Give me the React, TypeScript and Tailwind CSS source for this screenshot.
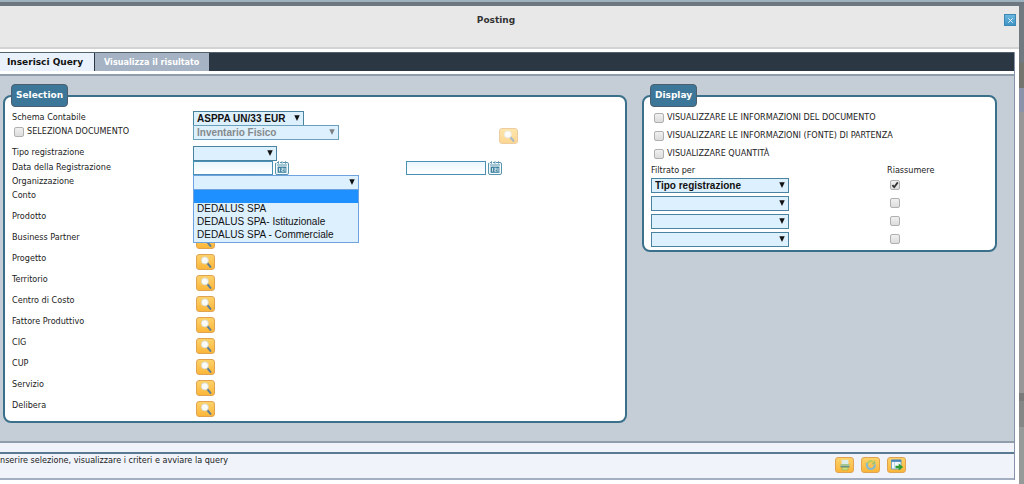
import type { ReactNode } from "react";

const labelFont = "font-['DejaVu_Sans_Condensed','DejaVu_Sans',sans-serif]";
const titleFont = "font-['DejaVu_Sans',sans-serif]";

function Select({ id, label, value, width, disabled, open }: {
  id: string;
  label: string;
  value?: string;
  width: string;
  disabled?: boolean;
  open?: boolean;
}) {
  return (
    <div className={`relative ${width}`}>
      <select
        id={id}
        aria-label={label}
        disabled={disabled}
        defaultValue={value ?? ""}
        className={`block h-[15px] w-full appearance-none border ${open ? "border-[#6fa3e0]" : disabled ? "border-[#6c9fbb]" : "border-[#4a83a0]"} bg-[#ddf0fd] pl-[3px] font-['Liberation_Sans',sans-serif] text-[10px] leading-[13px] font-bold opacity-100 outline-none ${disabled ? "text-[#85898c]" : "text-[#111]"}`}
      >
        <option value={value ?? ""}>{value ?? ""}</option>
      </select>
      <svg viewBox="0 0 6 6" className="pointer-events-none absolute top-[4px] right-[4px] size-[6px]" aria-hidden="true">
        <path d="M0.3 0.3h5.4L3 6z" fill={disabled ? "#7d8285" : "#111"} />
      </svg>
    </div>
  );
}

function Check({ id, label, checked }: { id: string; label?: string; checked?: boolean }) {
  return (
    <span className="relative block size-[10px] shrink-0">
      <input
        id={id}
        type="checkbox"
        aria-label={label}
        defaultChecked={checked}
        className="peer block size-[10px] appearance-none rounded-[2px] border border-[#b0b0b0] bg-linear-to-b from-[#f0f0f0] to-[#dcdcdc]"
      />
      <svg viewBox="0 0 10 10" className="pointer-events-none absolute inset-0 hidden size-[10px] peer-checked:block" aria-hidden="true">
        <path d="M2.4 5.2 4.2 7.2 7.8 2.4" fill="none" stroke="#333" strokeWidth="1.8" />
      </svg>
    </span>
  );
}

function IconButton({ label, faded, children }: { label: string; faded?: boolean; children: ReactNode }) {
  return (
    <button
      type="button"
      aria-label={label}
      disabled={faded}
      className={`flex h-[16px] w-[19px] shrink-0 items-center justify-center rounded-[3px] border border-[#dfa352] bg-linear-to-b from-[#fdd268] to-[#fbb638] ${faded ? "opacity-55" : ""}`}
    >
      {children}
    </button>
  );
}

function Magnifier() {
  return (
    <svg viewBox="0 0 12 12" className="size-[14px] shrink-0" aria-hidden="true">
      <path d="M6.8 6.6 9.8 10.2" stroke="#5d7f98" strokeWidth="1.8" strokeLinecap="round" />
      <circle cx="5" cy="4.6" r="3.1" fill="#f8fbf8" stroke="#d9d3bc" strokeWidth="0.7" />
    </svg>
  );
}

function CalendarButton({ label }: { label: string }) {
  return (
    <button type="button" aria-label={label} className="block size-[14px]">
      <svg viewBox="0 0 14 14" className="size-[14px]" aria-hidden="true">
        <rect x="0.5" y="1.5" width="13" height="12" rx="1.5" fill="#f4fbfe" stroke="#5793ac" />
        <path d="M1 1.5h12" stroke="#f4fbfe" strokeWidth="1" strokeDasharray="1 2" />
        <path d="M2 4h10M3.5 0.3v2.4M7 0.3v2.4M10.5 0.3v2.4" stroke="#5793ac" strokeWidth="1" />
        <path d="M2.6 5.6h8.8v6.2H2.6z" fill="#3d7f9c" />
        <path d="M4.6 7v3.6M6.4 7.3h1.8v1.4H6.8v1.6h1.8M10 7v3.6" fill="none" stroke="#e6f6fc" strokeWidth="0.9" />
      </svg>
    </button>
  );
}

function Fieldset({ title, className, children }: { title: string; className: string; children: ReactNode }) {
  return (
    <section className={`relative mt-[11px] rounded-[8px] border-2 border-[#3a708a] bg-white ${className}`}>
      <h2 className={`absolute -top-[13px] left-[6px] flex h-[23px] items-center rounded-[4px] border border-[#4b5f70] bg-[#3c7799] px-[4px] text-[9px] font-bold text-white ${titleFont}`}>
        {title}
      </h2>
      {children}
    </section>
  );
}

const lookups = [
  "Conto",
  "Prodotto",
  "Business Partner",
  "Progetto",
  "Territorio",
  "Centro di Costo",
  "Fattore Produttivo",
  "CIG",
  "CUP",
  "Servizio",
  "Delibera",
];

const organizations = ["DEDALUS SPA", "DEDALUS SPA- Istituzionale", "DEDALUS SPA - Commerciale"];

const displayOptions = [
  "VISUALIZZARE LE INFORMAZIONI DEL DOCUMENTO",
  "VISUALIZZARE LE INFORMAZIONI (FONTE) DI PARTENZA",
  "VISUALIZZARE QUANTITÀ",
];

const filters = ["Tipo registrazione", "", "", ""];

const dateInput =
  "block h-[14px] w-[80px] border border-[#4a8fb5] bg-linear-to-b from-[#eaf6fd] to-white px-[2px] font-['Liberation_Sans',sans-serif] text-[10px] outline-none";

function SelectionPanel() {
  const label = "w-[181px] shrink-0 leading-[12px]";
  return (
    <Fieldset title="Selection" className="min-w-0 flex-1 pt-[14px] pb-px pl-[7px]">
      <div className="flex h-[14px]">
        <label htmlFor="schema" className={label}>Schema Contabile</label>
        <Select id="schema" label="Schema Contabile" value="ASPPA UN/33 EUR" width="w-[111px]" />
      </div>
      <div className="flex h-[21px]">
        <div className="flex w-[181px] shrink-0 gap-[3px] pl-[2px]">
          <span className="pt-[2px]"><Check id="doc" /></span>
          <label htmlFor="doc" className="leading-[12px]">SELEZIONA DOCUMENTO</label>
        </div>
        <Select id="doctype" label="Tipo documento" value="Inventario Fisico" width="w-[146px]" disabled />
        <div className="ml-[160px] pt-[3px]">
          <IconButton label="Cerca documento" faded><Magnifier /></IconButton>
        </div>
      </div>
      <div className="flex h-[15px]">
        <label htmlFor="tipo" className={label}>Tipo registrazione</label>
        <Select id="tipo" label="Tipo registrazione" width="w-[84px]" />
      </div>
      <div className="flex h-[14px]">
        <label htmlFor="from" className={label}>Data della Registrazione</label>
        <div className="flex w-[213px] gap-[2px]">
          <input id="from" type="text" className={dateInput} />
          <CalendarButton label="Calendario data iniziale" />
        </div>
        <div className="flex gap-[2px]">
          <input type="text" aria-label="Data finale" className={dateInput} />
          <CalendarButton label="Calendario data finale" />
        </div>
      </div>
      <div className="flex h-[14px]">
        <label htmlFor="org" className={label}>Organizzazione</label>
        <div className="relative">
          <Select id="org" label="Organizzazione" width="w-[166px]" open />
          <ul
            role="listbox"
            aria-label="Organizzazione"
            className="absolute top-[14px] left-0 z-10 w-full border border-[#6fa3e0] bg-[#ddf0fd] font-['Liberation_Sans',sans-serif] text-[10px] leading-[13px] text-[#111]"
          >
            <li role="option" aria-selected="true" className="h-[13px] bg-[#1e90ff]" />
            {organizations.map((name) => (
              <li key={name} role="option" aria-selected="false" className="h-[13px] pl-[3px] leading-[12px] whitespace-nowrap">{name}</li>
            ))}
          </ul>
        </div>
      </div>
      {lookups.map((name) => (
        <div key={name} className="flex h-[21px]">
          <span className={label}>{name}</span>
          <div className="pt-[2px] pl-[3px]">
            <IconButton label={`Cerca ${name}`}><Magnifier /></IconButton>
          </div>
        </div>
      ))}
    </Fieldset>
  );
}

function DisplayPanel() {
  return (
    <Fieldset title="Display" className="w-[355px] shrink-0 self-start pt-[14px] pl-[7px]">
      {displayOptions.map((text, i) => (
        <div key={text} className="flex h-[18px] gap-[3px] pl-[3px]">
          <span className="pt-[2px]"><Check id={`show${i}`} /></span>
          <label htmlFor={`show${i}`} className="leading-[12px] whitespace-nowrap">{text}</label>
        </div>
      ))}
      <div className="flex h-[13px] leading-[11px]">
        <span className="w-[236px]">Filtrato per</span>
        <span>Riassumere</span>
      </div>
      {filters.map((value, i) => (
        <div key={i} className="flex h-[18px]">
          <div className="w-[239px]">
            <Select id={`filter${i}`} label={`Filtrato per ${i + 1}`} value={value} width="w-[138px]" />
          </div>
          <span className="pt-[2px]"><Check id={`sum${i}`} label={`Riassumere ${i + 1}`} checked={i === 0} /></span>
        </div>
      ))}
    </Fieldset>
  );
}

function PageEdge() {
  return (
    <div aria-hidden="true" className="flex w-[5px] shrink-0 flex-col bg-[#9a9799]">
      <div className="h-[57px] bg-[#70797f]" />
      <div className="h-[25px] bg-[#74756f]" />
      <div className="h-[24px] bg-[#8a93aa]" />
      <div className="flex-1" />
      <div className="h-[8px] bg-[#7a7a7b]" />
      <div className="h-[26px] bg-[#858686]" />
      <div className="h-[58px] bg-[#969b99]" />
    </div>
  );
}

export default function App() {
  return (
    <div className={`flex min-h-screen flex-col overflow-hidden border-t-2 border-[#9fb2c0] bg-[#6e777f] text-[9px] text-[#222] ${labelFont}`}>
      <div className="h-[4px]" />
      <div className="flex flex-1">
        <main className="flex min-w-0 flex-1 flex-col border-b border-[#999] bg-white">
          <header className="flex h-[43px] border-b-2 border-[#d3d3d3] bg-[#e8e8e8] pt-[8px] pr-[3px]">
            <h1 className={`flex-1 pr-[12px] text-center text-[9px] leading-[13px] font-bold text-[#333] ${titleFont}`}>Posting</h1>
            <button type="button" aria-label="Chiudi" className="flex size-[12px] items-center justify-center border border-[#3b87b5] bg-linear-to-b from-[#6bb6dd] to-[#3f94c4]">
              <svg viewBox="0 0 8 8" className="size-[7px]" aria-hidden="true">
                <path d="M1.5 1.5l5 5M6.5 1.5l-5 5" stroke="#e9f6fc" strokeWidth="1.1" />
              </svg>
            </button>
          </header>
          <div className="mt-[3px] mr-[4px] flex flex-1 flex-col border-r border-[#8494a6]">
            <nav className="flex h-[19px] border-t border-[#53616d] bg-[#2b3844]">
              <a href="#query" className={`flex w-[94px] items-center bg-[#e9f1fc] pt-px pl-[7px] text-[9px] font-bold whitespace-nowrap text-[#111] ${titleFont}`}>Inserisci Query</a>
              <a href="#result" className="ml-px flex w-[114px] items-center bg-[#a5b3c4] pt-px pl-[9px] font-bold whitespace-nowrap text-white">Visualizza il risultato</a>
            </nav>
            <div className="mt-[3px] flex flex-1 gap-[15px] border-y-2 border-[#909dab] bg-[#c5cdd7] pt-[8px] pr-[17px] pb-[18px] pl-[3px]">
              <SelectionPanel />
              <DisplayPanel />
            </div>
            <div className="h-[9px] bg-[#f0f3fa]" />
            <footer className="flex h-[28px] justify-between border-t-2 border-b-2 border-t-[#5a7a92] border-b-[#a3afc0] bg-[#f0f3fa]">
              <p className="leading-[12px]">nserire selezione, visualizzare i criteri e avviare la query</p>
              <div className="flex gap-[7px] pt-[3px] pr-[108px]">
                <IconButton label="Stampa">
                  <svg viewBox="0 0 12 12" className="size-[12px]" aria-hidden="true">
                    <path d="M2.6 0.8h6.8v4.4H2.6z" fill="#dcecea" />
                    <path d="M1.5 5h9v2.2h-9z" fill="#a5c48f" />
                    <path d="M1.5 7.2h9v1.2h-9z" fill="#3f8a9c" />
                    <path d="M3 8.6h6V11H3z" fill="#cfe07c" stroke="#8ba05a" strokeWidth="0.5" />
                  </svg>
                </IconButton>
                <IconButton label="Reimposta">
                  <svg viewBox="0 0 12 12" className="size-[12px]" aria-hidden="true">
                    <path d="M2.8 3.4A4 4 0 1 0 9.8 5.4" fill="none" stroke="#86b9cc" strokeWidth="2.2" />
                    <path d="M2.6 4.4A4 4 0 0 1 7.6 2.3" fill="none" stroke="#b9cd62" strokeWidth="2" />
                    <path d="M6.2 5.4 10.6 5 9.8 1z" fill="#a3c46a" />
                  </svg>
                </IconButton>
                <IconButton label="Avvia query">
                  <svg viewBox="0 0 14 12" className="h-[12px] w-[14px]" aria-hidden="true">
                    <path d="M1.5 1h9.5v9H1.5z" fill="#f1f7fc" stroke="#5c95c5" strokeWidth="0.8" />
                    <path d="M1.2 0.7h10v2.2h-10z" fill="#4a86bd" />
                    <path d="M4.5 3v7" stroke="#a9c9e2" strokeWidth="0.7" />
                    <path d="M5.5 6.8h3.2V4.6L13.2 8l-4.5 3.5V9.2H5.5z" fill="#2f9b35" />
                  </svg>
                </IconButton>
              </div>
            </footer>
          </div>
          <div className="h-[4px]" />
        </main>
        <PageEdge />
      </div>
    </div>
  );
}
